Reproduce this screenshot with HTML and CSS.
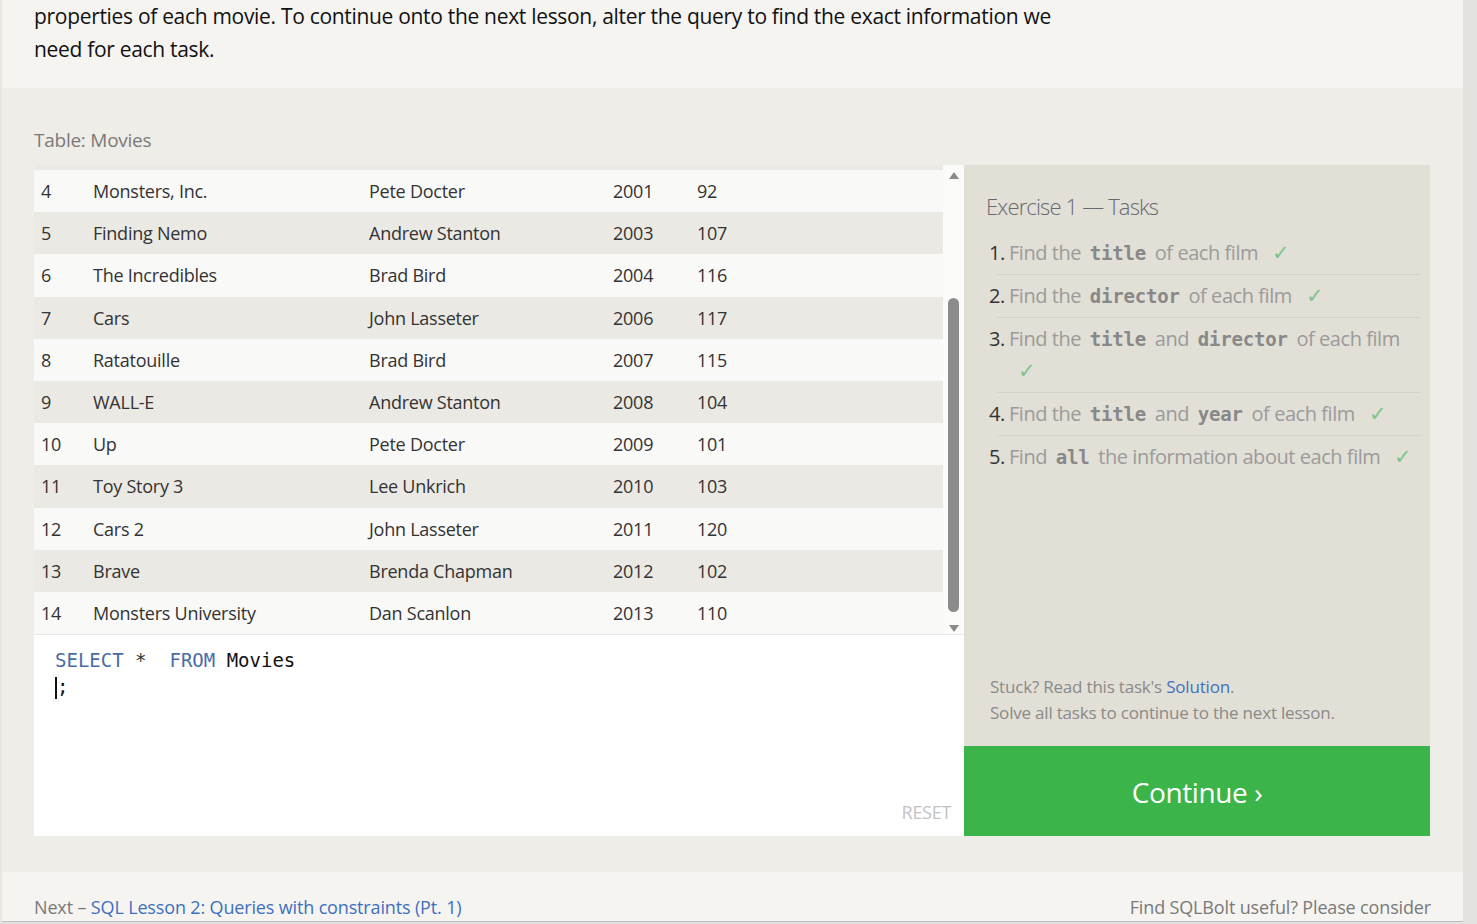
FILE: index.html
```html
<!DOCTYPE html>
<html lang="en">
<head>
<meta charset="utf-8">
<title>SQLBolt - Exercise 1</title>
<link rel="stylesheet" href="styles.css">
</head>
<body>
<div class="page">
  <div class="intro">
    <p>properties of each movie. To continue onto the next lesson, alter the query to find the exact information we<br>need for each task.</p>
  </div>
  <section class="exercise">
    <div class="table-label">Table: Movies</div>
    <div class="workspace">
      <div class="left">
        <div class="table-view">
          <div class="rows">
            <div class="strip"></div>
            <div class="row"><span class="c-id">4</span><span class="c-title">Monsters, Inc.</span><span class="c-dir">Pete Docter</span><span class="c-year">2001</span><span class="c-len">92</span></div>
            <div class="row alt"><span class="c-id">5</span><span class="c-title">Finding Nemo</span><span class="c-dir">Andrew Stanton</span><span class="c-year">2003</span><span class="c-len">107</span></div>
            <div class="row"><span class="c-id">6</span><span class="c-title">The Incredibles</span><span class="c-dir">Brad Bird</span><span class="c-year">2004</span><span class="c-len">116</span></div>
            <div class="row alt"><span class="c-id">7</span><span class="c-title">Cars</span><span class="c-dir">John Lasseter</span><span class="c-year">2006</span><span class="c-len">117</span></div>
            <div class="row"><span class="c-id">8</span><span class="c-title">Ratatouille</span><span class="c-dir">Brad Bird</span><span class="c-year">2007</span><span class="c-len">115</span></div>
            <div class="row alt"><span class="c-id">9</span><span class="c-title">WALL-E</span><span class="c-dir">Andrew Stanton</span><span class="c-year">2008</span><span class="c-len">104</span></div>
            <div class="row"><span class="c-id">10</span><span class="c-title">Up</span><span class="c-dir">Pete Docter</span><span class="c-year">2009</span><span class="c-len">101</span></div>
            <div class="row alt"><span class="c-id">11</span><span class="c-title">Toy Story 3</span><span class="c-dir">Lee Unkrich</span><span class="c-year">2010</span><span class="c-len">103</span></div>
            <div class="row"><span class="c-id">12</span><span class="c-title">Cars 2</span><span class="c-dir">John Lasseter</span><span class="c-year">2011</span><span class="c-len">120</span></div>
            <div class="row alt"><span class="c-id">13</span><span class="c-title">Brave</span><span class="c-dir">Brenda Chapman</span><span class="c-year">2012</span><span class="c-len">102</span></div>
            <div class="row"><span class="c-id">14</span><span class="c-title">Monsters University</span><span class="c-dir">Dan Scanlon</span><span class="c-year">2013</span><span class="c-len">110</span></div>
          </div>
          <div class="scrollbar">
            <svg class="arrow" width="12" height="10" viewBox="0 0 12 10"><path d="M1 9 L6 2 L11 9 Z" fill="#8a8a8a"/></svg>
            <div class="track"><div class="thumb"></div></div>
            <svg class="arrow" width="12" height="10" viewBox="0 0 12 10"><path d="M1 1 L6 8 L11 1 Z" fill="#8a8a8a"/></svg>
          </div>
        </div>
        <div class="editor">
          <div class="code">
            <div class="code-line"><span class="kw">SELECT</span> <span class="op">*</span>  <span class="kw">FROM</span> Movies</div>
            <div class="code-line"><span class="cursor"></span>;</div>
          </div>
          <div class="reset">RESET</div>
        </div>
      </div>
      <div class="right">
        <div class="tasks">
          <h3 class="tasks-title">Exercise 1 — Tasks</h3>
          <ol class="task-list">
            <li><span class="num">1.</span><span class="txt">Find the <code>title</code> of each film <span class="check">✓</span></span></li>
            <li><span class="num">2.</span><span class="txt">Find the <code>director</code> of each film <span class="check">✓</span></span></li>
            <li><span class="num">3.</span><span class="txt">Find the <code>title</code> and <code>director</code> of each film <span class="check">✓</span></span></li>
            <li><span class="num">4.</span><span class="txt">Find the <code>title</code> and <code>year</code> of each film <span class="check">✓</span></span></li>
            <li><span class="num">5.</span><span class="txt">Find <code>all</code> the information about each film <span class="check">✓</span></span></li>
          </ol>
          <div class="help">
            <p>Stuck? Read this task's <a href="#">Solution</a>.</p>
            <p>Solve all tasks to continue to the next lesson.</p>
          </div>
        </div>
        <a class="continue" href="#">Continue ›</a>
      </div>
    </div>
  </section>
  <footer class="footer">
    <div class="next">Next – <a href="#">SQL Lesson 2: Queries with constraints (Pt. 1)</a></div>
    <div class="support">Find SQLBolt useful? Please consider</div>
  </footer>
</div>
</body>
</html>
```

FILE: styles.css
```css
* { box-sizing: border-box; }

html, body {
  margin: 0;
  padding: 0;
}

body {
  background: #e3e0dd;
  font-family: "Open Sans", "Noto Sans", sans-serif;
  color: #222;
  overflow: hidden;
}

a { text-decoration: none; }

.page {
  width: 1463px;
  border-left: 2px solid #e9e6e2;
  background: #f5f4f1;
}

.intro {
  height: 88px;
  padding: 0 32px;
}

.intro p {
  margin: 0;
  font-size: 21px;
  line-height: 33px;
  color: #111;
  letter-spacing: -0.31px;
}

.exercise {
  background: #efede7;
  padding: 39px 33px 35px 32px;
}

.table-label {
  font-size: 19px;
  line-height: 26px;
  color: #7a7a7a;
  margin-bottom: 12px;
  letter-spacing: -0.25px;
}

.workspace {
  display: flex;
}

.left {
  width: 930px;
  display: flex;
  flex-direction: column;
}

.table-view {
  height: 470px;
  display: flex;
  background: #f9f9f8;
  border-bottom: 1px solid #ebe9e4;
}

.rows {
  width: 909px;
  overflow: hidden;
}

.strip {
  height: 5px;
  background: #ebe9e3;
}

.row {
  height: 42.2px;
  display: flex;
  align-items: center;
  font-size: 18px;
  color: #333;
  background: #f9f9f8;
  letter-spacing: -0.25px;
}

.row.alt {
  background: #ebe9e3;
}

.c-id { width: 59px; padding-left: 7px; }
.c-title { width: 276px; }
.c-dir { width: 244px; }
.c-year { width: 84px; }
.c-len { flex: 1; }

.scrollbar {
  width: 21px;
  display: flex;
  flex-direction: column;
  align-items: center;
  background: #fbfbfa;
  padding-top: 5px;
}

.arrow { display: block; flex: none; }

.track {
  flex: 1;
  width: 100%;
  display: flex;
  justify-content: center;
}

.thumb {
  width: 11px;
  height: 314px;
  margin-top: 118px;
  background: #8b8b8b;
  border-radius: 6px;
}

.editor {
  height: 201px;
  background: #ffffff;
  display: flex;
  flex-direction: column;
  padding: 12px 13px 12px 21px;
}

.code {
  flex: 1;
  font-family: "DejaVu Sans Mono", "Liberation Mono", monospace;
  font-size: 19px;
  line-height: 26px;
  color: #111;
}

.code-line { white-space: pre; }

.kw { color: #4a6ca6; }
.op { color: #333; }

.cursor {
  display: inline-block;
  width: 2px;
  height: 22px;
  background: #111;
  vertical-align: -6px;
}

.reset {
  align-self: flex-end;
  font-size: 18px;
  line-height: 24px;
  color: #c2c2c2;
  letter-spacing: -0.3px;
}

.right {
  width: 466px;
  display: flex;
  flex-direction: column;
}

.tasks {
  height: 581px;
  background: #e1dfd6;
  padding: 26px 10px 20px 22px;
  display: flex;
  flex-direction: column;
}

.tasks-title {
  margin: 0;
  font-size: 22px;
  line-height: 30px;
  font-weight: 300;
  color: #656a70;
  letter-spacing: -0.85px;
}

.task-list {
  list-style: none;
  margin: 11px 0 0 3px;
  padding: 0;
}

.task-list li {
  display: flex;
  padding: 5px 0 6px;
  font-size: 20px;
  line-height: 32px;
  letter-spacing: -0.45px;
  background: linear-gradient(#d6d4ca, #d6d4ca) 8px 100% / calc(100% - 8px) 1px no-repeat;
}

.task-list li:last-child { background: none; }

.num {
  width: 20px;
  flex: none;
  color: #333;
}

.txt {
  color: #9b9b9b;
}

.txt code {
  font-family: "DejaVu Sans Mono", "Liberation Mono", monospace;
  font-weight: bold;
  font-size: 19px;
  line-height: 20px;
  color: #888;
  padding: 0 4px;
  letter-spacing: -0.2px;
}

.check {
  display: inline-block;
  color: #7cc58a;
  margin-left: 9px;
  font-family: "DejaVu Sans", sans-serif;
  font-size: 21px;
  line-height: 20px;
  font-weight: 300;
}

.help {
  margin-top: auto;
  padding-left: 4px;
}

.help p {
  margin: 0;
  font-size: 17px;
  line-height: 26px;
  color: #8a8a8a;
  letter-spacing: -0.2px;
}

.help a { color: #3f72c2; }

.continue {
  height: 90px;
  background: #3bb54a;
  color: #fff;
  font-size: 28px;
  line-height: 92px;
  text-align: center;
  letter-spacing: -0.4px;
}

.footer {
  height: 51px;
  display: flex;
  justify-content: space-between;
  padding: 22px 32px 0 32px;
  border-top: 1px solid #f0eee9;
  border-bottom: 1px solid #b9bdc2;
  font-size: 18px;
  line-height: 26px;
  color: #7a7a7a;
  letter-spacing: -0.15px;
}

.footer a { color: #3e70bf; }
```
